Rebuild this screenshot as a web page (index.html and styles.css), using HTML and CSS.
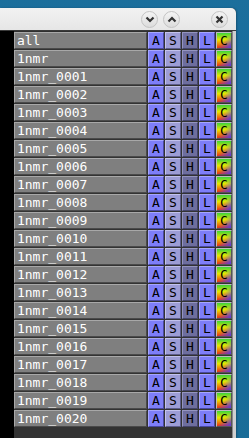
FILE: index.html
```html
<!DOCTYPE html>
<html lang="en">
<head>
  <meta charset="UTF-8">
  <title>Object Panel</title>
  <link rel="stylesheet" href="styles.css">
</head>
<body>

  <div class="window">
    <div class="titlebar">
      <span class="tb-btn tb-down">
        <svg width="10" height="7" viewBox="0 0 10 7"><path d="M1.5 1.5 L5 5 L8.5 1.5" fill="none" stroke="#333" stroke-width="2.2"/></svg>
      </span>
      <span class="tb-btn tb-up">
        <svg width="10" height="7" viewBox="0 0 10 7"><path d="M1.5 5.5 L5 2 L8.5 5.5" fill="none" stroke="#333" stroke-width="2.2"/></svg>
      </span>
      <span class="tb-btn tb-close">
        <svg width="9" height="9" viewBox="0 0 9 9"><path d="M1.5 1.5 L7.5 7.5 M7.5 1.5 L1.5 7.5" fill="none" stroke="#333" stroke-width="2.2"/></svg>
      </span>
    </div>

    <div class="panel">
      <div class="gutter"></div>
      <div class="list" id="list">
        <!-- rows are filled in by the script -->
      </div>
      <div class="frame"></div>
    </div>
  </div>

  <script>
    const names = ["all", "1nmr"];
    for (let i = 1; i <= 20; i++) {
      names.push("1nmr_" + String(i).padStart(4, "0"));
    }

    const list = document.getElementById("list");
    names.forEach(name => {
      const row = document.createElement("div");
      row.className = "row";
      row.innerHTML = `
        <div class="name">${name}</div>
        <div class="btn btn-a">A</div>
        <div class="btn btn-s">S</div>
        <div class="btn btn-h">H</div>
        <div class="btn btn-l">L</div>
        <div class="btn btn-c">C</div>
      `;
      list.appendChild(row);
    });
  </script>

</body>
</html>
```

FILE: styles.css
```css
html, body {
  margin: 0;
  height: 100%;
}

body {
  background: linear-gradient(to bottom, #1c6f9c, #0f6aa3 40%, #1a6d98);
  overflow: hidden;
  font-family: "DejaVu Sans Mono", "Liberation Mono", monospace;
}

.window {
  width: 236px;
  margin-top: 8px;
  height: 430px;
  display: flex;
  flex-direction: column;
  background: #2f2f2f;
  border-top-right-radius: 5px;
  box-shadow: 1px 0 2px rgba(0, 0, 0, 0.25);
}

.titlebar {
  height: 22px;
  display: flex;
  align-items: center;
  background: linear-gradient(to bottom, #f2f2f2, #e6e6e6);
  border-top-right-radius: 5px;
  border-bottom: 1px solid #3a3a3a;
  padding-right: 8px;
  justify-content: flex-end;
}

.tb-btn {
  width: 15px;
  height: 15px;
  border-radius: 50%;
  background: linear-gradient(to bottom, #f4f4f4, #dcdcdc);
  border: 1px solid #c4c4c4;
  display: flex;
  align-items: center;
  justify-content: center;
}

.tb-up {
  margin-left: 5px;
}

.tb-close {
  margin-left: 31px;
}

.panel {
  flex: 1;
  display: flex;
  padding-top: 1px;
}

.gutter {
  width: 14px;
  background: #000;
  margin-top: -1px;
}

.list {
  display: flex;
  flex-direction: column;
  gap: 1px;
  background: #333;
  width: 219px;
}

.frame {
  width: 3px;
  background: #cfcfcf;
  border-left: 1px solid #888;
  margin-top: -1px;
}

.row {
  display: flex;
  gap: 1px;
  height: 17px;
}

.name,
.btn {
  box-sizing: border-box;
  height: 17px;
  border: 1px solid;
  border-color: #a8a8a8 #4a4a4a #4a4a4a #a8a8a8;
  font-size: 13px;
  line-height: 16px;
}

.name {
  width: 133px;
  background: #7f7f7f;
  color: #fff;
  padding-left: 2px;
}

.btn {
  width: 16px;
  color: #000;
  text-align: center;
}

.btn-a,
.btn-l {
  background: #7e7ef8;
  border-color: #a6a6ff #4848a0 #4848a0 #a6a6ff;
}

.btn-s {
  background: #9d9dd6;
  border-color: #c2c2ee #5c5c8c #5c5c8c #c2c2ee;
}

.btn-h {
  background: #6e6e9e;
  border-color: #9494c0 #44446a #44446a #9494c0;
}

.btn-c {
  background:
    linear-gradient(135deg, transparent 50%, rgba(70, 60, 255, 0.9) 100%),
    linear-gradient(to bottom, #3ad43a, #e8e800 45%, #f03010 100%);
  border-color: #bdbdbd #555 #555 #bdbdbd;
}
```
